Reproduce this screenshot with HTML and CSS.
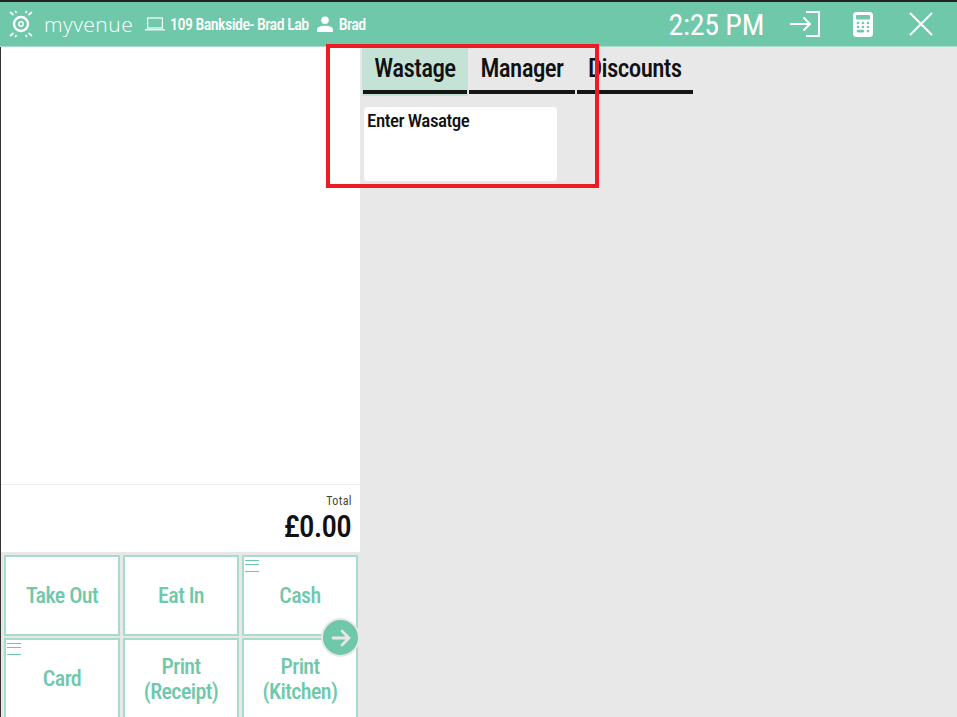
FILE: index.html
```html
<!DOCTYPE html>
<html lang="en">
<head>
    <meta charset="UTF-8">
    <meta name="viewport" content="width=device-width, initial-scale=1.0">
    <title>myvenue</title>
    <link rel="stylesheet" href="styles.css">
</head>
<body>
    <!-- Top bar -->
    <header id="topBar">
        <div class="barLeft">
            <svg class="logo" viewBox="0 0 28 28" width="28" height="28" fill="none" stroke="#fff">
                <circle cx="14" cy="14" r="7" stroke-width="2.4"/>
                <circle cx="14" cy="14" r="2.2" stroke-width="1.6"/>
                <path d="M3 2l3.500 3M8 1l1.500 2M25 2l-3.500 3M20 1l-1.500 2M3 26l3.500-3M8 27l1.500-2M25 26l-3.500-3M20 27l-1.500-2" stroke-width="1.700"/>
            </svg>
            <span class="brand">myvenue</span>
            <svg class="laptop" viewBox="0 0 20 14" width="20" height="14" fill="none" stroke="#fff" stroke-width="1.2">
                <rect x="2.600" y="1" width="14.800" height="10"/>
                <path d="M0 12.800h20"/>
            </svg>
            <span class="site">109 Bankside- Brad Lab</span>
            <svg class="person" viewBox="0 0 16 16" width="16" height="16" fill="#fff">
                <circle cx="8" cy="4.200" r="3.800"/>
                <path d="M0 16v-2.400c0-2.600 4-3.800 8-3.800s8 1.200 8 3.800V16z"/>
            </svg>
            <span class="site">Brad</span>
        </div>
        <div class="barRight">
            <span class="clock">2:25 PM</span>
            <svg class="exitIcon" viewBox="0 0 30 26" width="30" height="26" fill="none" stroke="#fff" stroke-width="2">
                <path d="M0 13h20M13.500 6.500L20 13l-6.500 6.500M16 1h13v24H16"/>
            </svg>
            <svg class="calcIcon" viewBox="0 0 20 25" width="20" height="25" fill="#6fc8a9">
                <rect width="20" height="25" rx="3.500" fill="#fff"/>
                <rect x="3" y="3" width="14" height="4.500" rx="1"/>
                <circle cx="5" cy="11" r="1.300"/>
                <circle cx="10" cy="11" r="1.300"/>
                <circle cx="15" cy="11" r="1.300"/>
                <circle cx="5" cy="15" r="1.300"/>
                <circle cx="10" cy="15" r="1.300"/>
                <circle cx="15" cy="15" r="1.300"/>
                <rect x="3.700" y="17.800" width="7.600" height="2.600" rx="1.300"/>
                <circle cx="15" cy="19.100" r="1.300"/>
            </svg>
            <svg class="closeIcon" viewBox="0 0 24 24" width="24" height="24" fill="none" stroke="#fff" stroke-width="2">
                <path d="M1 1l22 22M23 1L1 23"/>
            </svg>
        </div>
    </header>

    <div id="screen">
        <!-- Order column -->
        <aside id="order">
            <div class="orderLines"></div>
            <div class="totals">
                <span class="totalLabel">Total</span>
                <span class="totalValue">£0.00</span>
            </div>
            <div class="actions">
                <button class="action">Take Out</button>
                <button class="action">Eat In</button>
                <button class="action hasMenu">Cash</button>
                <button class="action hasMenu">Card</button>
                <button class="action">Print<br>(Receipt)</button>
                <button class="action">Print<br>(Kitchen)</button>
                <span class="nextBtn">
                    <svg viewBox="0 0 20 18" width="20" height="18" fill="none" stroke="#e7e7e7" stroke-width="2.800" stroke-linecap="round" stroke-linejoin="round">
                        <path d="M2 9h16M11 2l7 7-7 7"/>
                    </svg>
                </span>
            </div>
        </aside>

        <!-- Function tabs -->
        <main id="panel">
            <div class="tabs">
                <div class="tab active"><span class="tabLabel">Wastage</span></div>
                <div class="tab"><span class="tabLabel">Manager</span></div>
                <div class="tab wide"><span class="tabLabel">Discounts</span></div>
            </div>
            <div class="card">Enter Wasatge</div>
        </main>
    </div>

    <div id="highlight"></div>
</body>
</html>
```

FILE: styles.css
```css
:root {
    --green: #6fc8a9;
    --green-border: #a6dcc9;
    --grey: #e8e8e8;
    --text: #111;
}
* {
    margin: 0;
    padding: 0;
    box-sizing: border-box;
}
html, body {
    height: 717px;
    overflow: hidden;
}
body {
    font-family: "Roboto", "Liberation Sans", sans-serif;
    font-stretch: condensed;
    color: var(--text);
    background-color: var(--grey);
    position: relative;
}
#topBar {
    height: 47px;
    background-color: var(--green);
    border-top: 2px solid #222;
    border-bottom: 1px solid #a6dcc9;
    display: flex;
    align-items: center;
    justify-content: space-between;
    color: white;
}
.barLeft {
    display: flex;
    align-items: center;
    padding-left: 7px;
}
.brand {
    font-family: "Open Sans", sans-serif;
    font-stretch: normal;
    font-size: 21px;
    font-weight: 300;
    margin-left: 9px;
    width: 88px;
    letter-spacing: 0.5px;
}
.laptop {
    margin-left: 13px;
}
.person {
    margin-left: 8px;
}
.site {
    font-size: 16px;
    font-weight: 500;
    margin-left: 5px;
    letter-spacing: -0.55px;
}
.person + .site {
    margin-left: 6px;
}
.barRight {
    display: flex;
    align-items: center;
    padding-right: 24px;
}
.clock {
    font-size: 30px;
    letter-spacing: -0.3px;
}
.exitIcon {
    margin-left: 26px;
}
.calcIcon {
    margin-left: 33px;
}
.closeIcon {
    margin-left: 36px;
}
#screen {
    display: flex;
    height: 670px;
}
#order {
    width: 360px;
    background-color: white;
    border-left: 1px solid #333;
    display: flex;
    flex-direction: column;
}
.orderLines {
    flex: none;
    height: 438px;
    border-bottom: 1px solid #eee;
}
.totals {
    flex: none;
    height: 67px;
    display: flex;
    flex-direction: column;
    align-items: flex-end;
    padding: 9px 8px 0 0;
}
.totalLabel {
    font-size: 12px;
    line-height: 14px;
    letter-spacing: 0.4px;
    color: #444;
}
.totalValue {
    font-size: 31px;
    font-weight: 500;
    letter-spacing: -0.8px;
    line-height: 34px;
    margin: 1.5px 1px 0 0;
}
.actions {
    flex: none;
    height: 165px;
    overflow: hidden;
    background-color: var(--grey);
    display: grid;
    grid-template-columns: repeat(3, 116px);
    grid-template-rows: 81px 81px;
    gap: 2px 3px;
    padding: 3px 0 0 3px;
    position: relative;
}
.action {
    background-color: white;
    border: 2px solid var(--green-border);
    color: var(--green);
    font-family: inherit;
    font-stretch: condensed;
    font-size: 22px;
    font-weight: 500;
    letter-spacing: -0.6px;
    line-height: 25px;
    position: relative;
}
.hasMenu::before {
    content: "";
    position: absolute;
    top: 3px;
    left: 1px;
    width: 14px;
    height: 10px;
    border-top: 1px solid var(--green);
    border-bottom: 1px solid var(--green);
}
.hasMenu::after {
    content: "";
    position: absolute;
    top: 7px;
    left: 1px;
    width: 14px;
    height: 1px;
    background-color: var(--green);
}
.nextBtn {
    position: absolute;
    top: 66px;
    left: 320px;
    width: 39px;
    height: 39px;
    border-radius: 50%;
    background-color: var(--green);
    border: 2px solid var(--grey);
    display: flex;
    align-items: center;
    justify-content: center;
}
#panel {
    flex: 1;
    padding: 1px 0 0 2px;
}
.tabs {
    display: flex;
}
.tab {
    width: 106px;
    height: 48px;
    padding: 0 1px 2px;
    font-size: 25px;
    font-weight: 500;
    letter-spacing: -0.6px;
    text-align: center;
}
.tab:nth-child(2) {
    width: 108px;
}
.tab.wide {
    width: 118px;
    text-align: left;
}
.tab.wide .tabLabel {
    padding-left: 11px;
}
.tab.active {
    background-color: #c4e2d6;
}
.tabLabel {
    display: block;
    height: 46px;
    border-bottom: 4px solid #151515;
    line-height: 42px;
}
.card {
    width: 193px;
    height: 74px;
    margin: 11px 0 0 2px;
    padding: 2px 3px;
    background-color: white;
    border-radius: 4px;
    font-size: 19px;
    font-weight: 500;
    letter-spacing: -0.5px;
}
#highlight {
    position: absolute;
    left: 326px;
    top: 44px;
    width: 273px;
    height: 144px;
    border: 4px solid #ed1c24;
}
```
